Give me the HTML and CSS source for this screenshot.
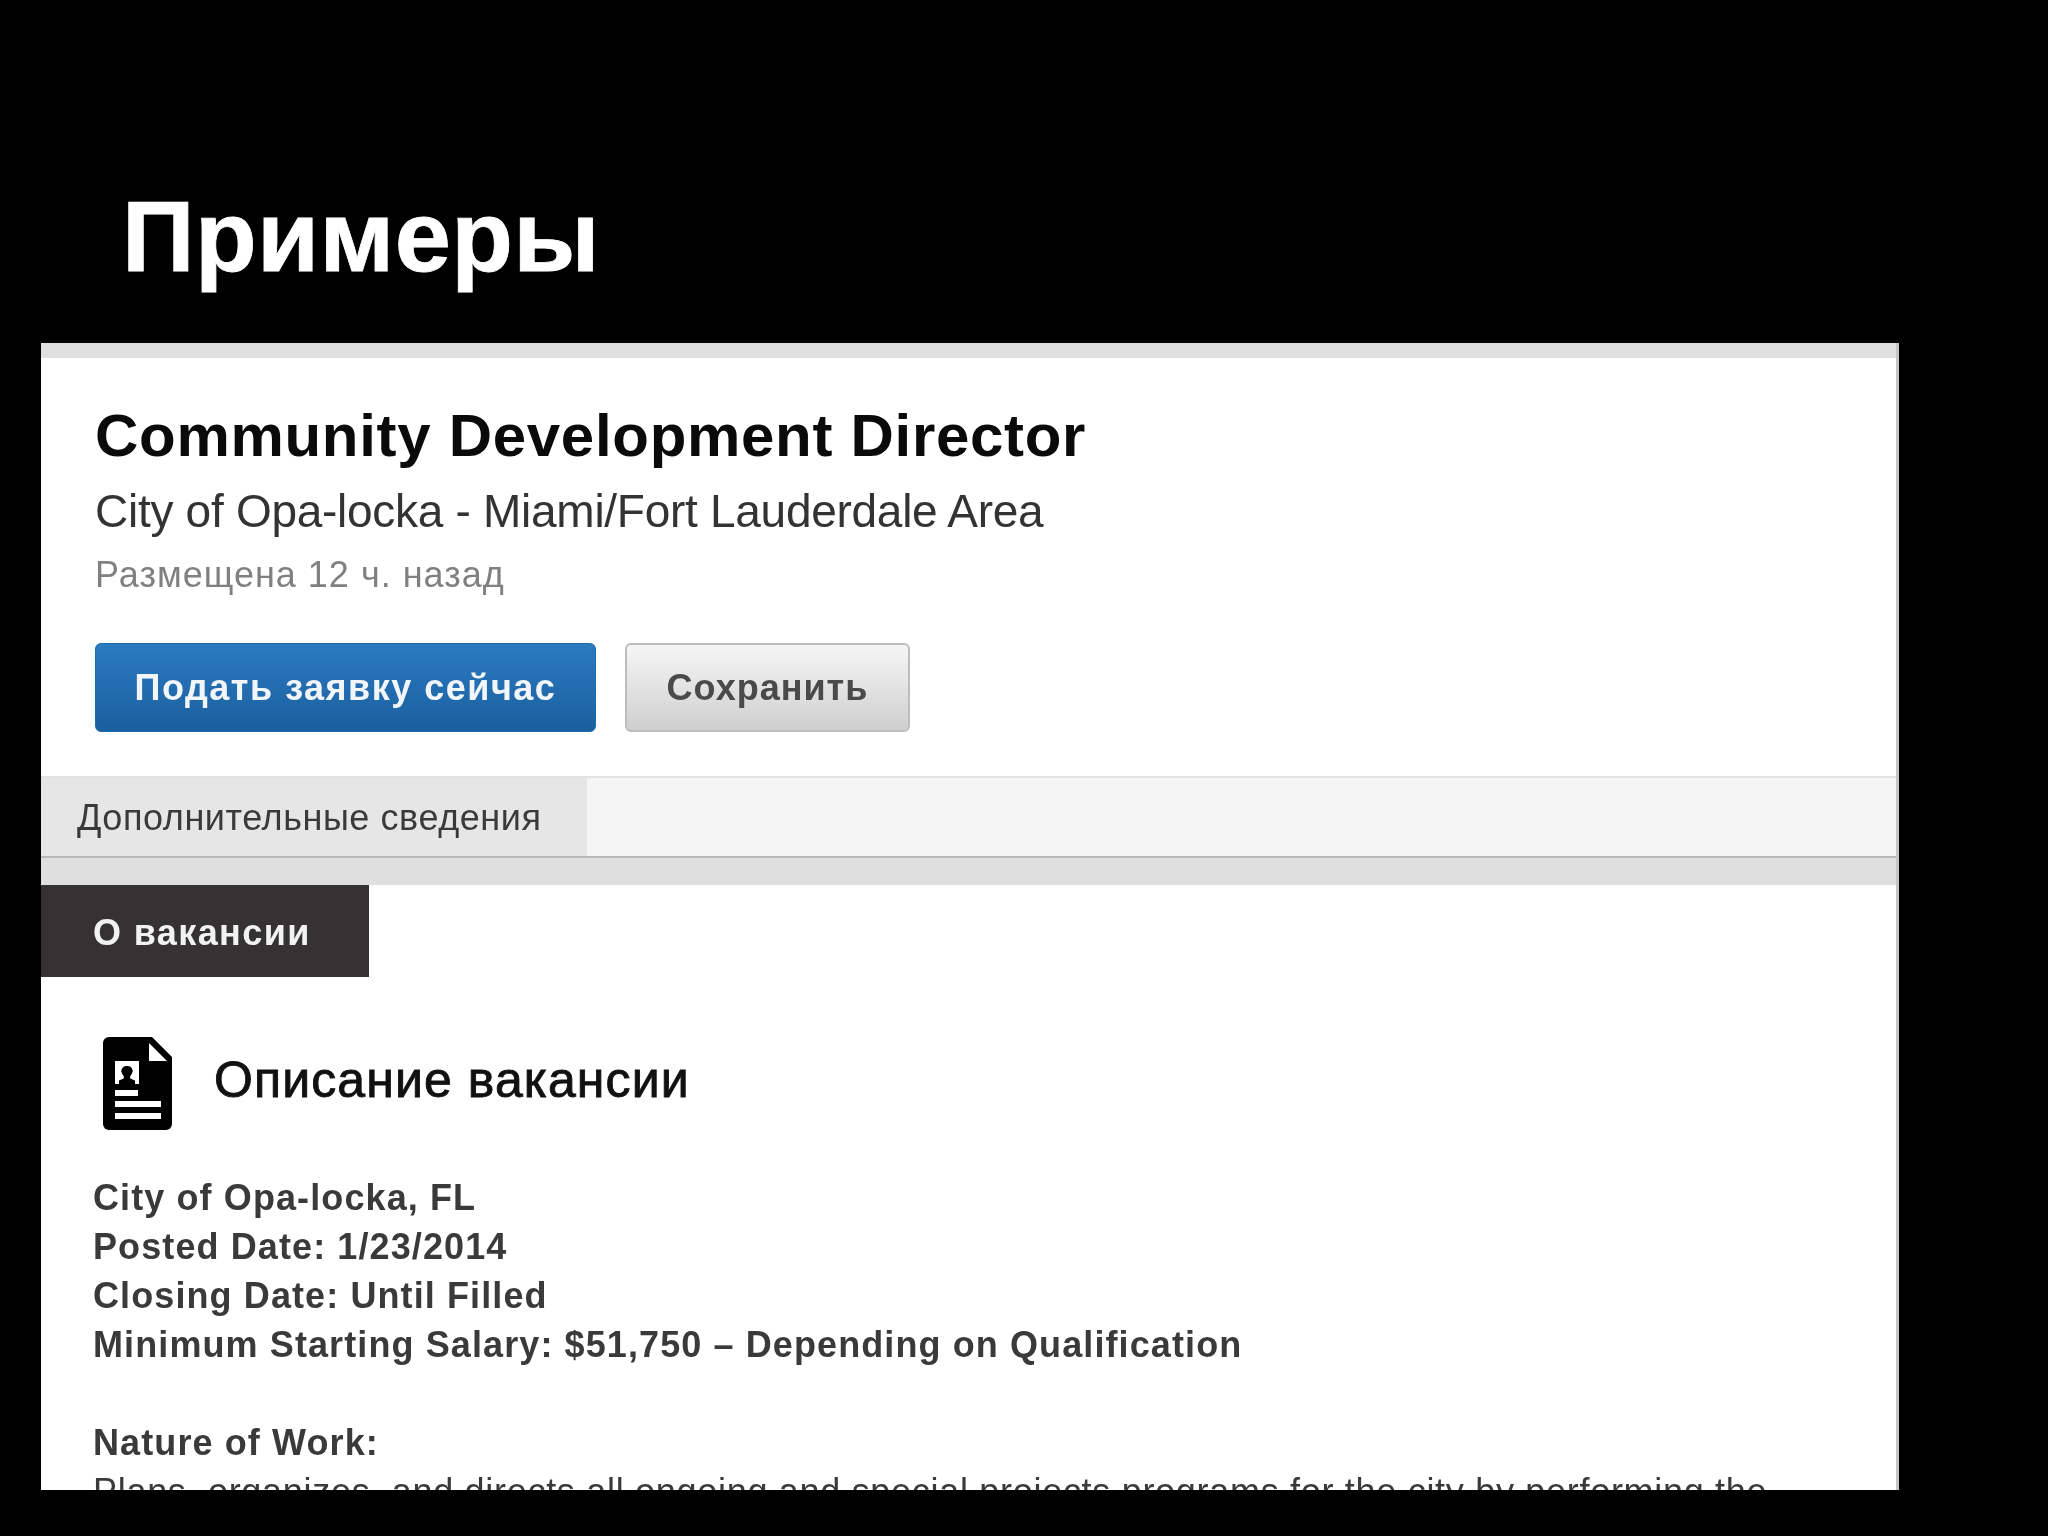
FILE: index.html
```html
<!DOCTYPE html>
<html lang="ru">
<head>
<meta charset="utf-8">
<title>Примеры</title>
<link rel="stylesheet" href="styles.css">
</head>
<body>
<main class="slide">
  <h1 class="slide-title">Примеры</h1>
  <section class="card">
    <div class="strip-top"></div>
    <header class="job-head">
      <h2 class="job-title">Community Development Director</h2>
      <p class="job-company">City of Opa-locka - Miami/Fort Lauderdale Area</p>
      <p class="job-date">Размещена 12 ч. назад</p>
      <div class="actions">
        <button class="btn btn-primary">Подать заявку сейчас</button>
        <button class="btn btn-secondary">Сохранить</button>
      </div>
    </header>
    <nav class="tabs"><span class="tab">Дополнительные сведения</span></nav>
    <div class="strip-mid"></div>
    <div class="section-tab">О вакансии</div>
    <div class="doc-head">
      <svg class="doc-icon" viewBox="0 0 70 93" aria-hidden="true">
        <path fill="#000" d="M6 0H49L69 20V87a6 6 0 0 1-6 6H6a6 6 0 0 1-6-6V6a6 6 0 0 1 6-6Z"/>
        <path fill="#fff" d="M46 6V24H64Z"/>
        <rect fill="#fff" x="12" y="24" width="24" height="23"/>
        <path fill="#000" d="M24 29a5 5 0 0 1 5 7.500c-1 2-2 2.500-2 4 0 1.500 3 2 5 3V47H16v-3.500c2-1 5-1.500 5-3 0-1.500-1-2-2-4a5 5 0 0 1 5-7.500Z"/>
        <rect fill="#fff" x="12" y="53" width="23" height="6"/>
        <rect fill="#fff" x="12" y="64" width="46" height="6"/>
        <rect fill="#fff" x="12" y="76" width="46" height="6"/>
      </svg>
      <h3 class="doc-title">Описание вакансии</h3>
    </div>
    <div class="doc-body">
      <p class="doc-para strong">City of Opa-locka, FL<br>Posted Date: 1/23/2014<br>Closing Date: Until Filled<br>Minimum Starting Salary: $51,750 – Depending on Qualification</p>
      <p class="doc-para strong">Nature of Work:</p>
      <p class="doc-para plain">Plans, organizes, and directs all ongoing and special projects programs for the city by performing the</p>
    </div>
  </section>
</main>
</body>
</html>
```

FILE: styles.css
```css
* { box-sizing: border-box; }
html, body { margin: 0; padding: 0; background: #000; }
body { font-family: "Liberation Sans", Arial, sans-serif; }
.slide { width: 2048px; height: 1536px; overflow: hidden; padding-top: 181px; }
.slide-title {
  margin: 0 0 52px;
  padding-left: 122px;
  height: 110px;
  font-size: 101px;
  line-height: 110px;
  letter-spacing: 0.4px;
  font-weight: 700;
  -webkit-text-stroke: 0.8px #fff;
  color: #fff;
}
.card {
  margin-left: 41px;
  width: 1858px;
  height: 1147px;
  overflow: hidden;
  background: #fff;
  border-right: 3px solid #c6c6c6;
  filter: blur(0.5px);
}
.strip-top { height: 15px; background: #e0e0e0; }
.job-head { height: 418px; padding: 44px 0 0 54px; }
.job-title {
  margin: 0;
  font-size: 60px;
  line-height: 68px;
  letter-spacing: 0.7px;
  font-weight: 700;
  color: #0a0a0a;
}
.job-company {
  margin: 13px 0 0;
  font-size: 46px;
  line-height: 56px;
  letter-spacing: -0.28px;
  color: #333;
}
.job-date {
  margin: 14px 0 0;
  font-size: 36px;
  line-height: 44px;
  letter-spacing: 1px;
  color: #808080;
}
.actions { display: flex; gap: 29px; margin-top: 46px; }
.btn {
  height: 89px;
  padding: 0;
  border-radius: 6px;
  font-family: inherit;
  font-size: 36px;
  font-weight: 700;
}
.btn-primary {
  width: 501px;
  border: 1px solid #1c6aa8;
  background: linear-gradient(#2b7bc1, #1a5f9f);
  letter-spacing: 1.5px;
  color: #f2f6fa;
}
.btn-secondary {
  width: 285px;
  border: 2px solid #bdbdbd;
  background: linear-gradient(#f6f6f6, #cfcfcf);
  letter-spacing: 1px;
  color: #4a4a4a;
}
.tabs {
  height: 82px;
  background: #f6f5f6;
  border-top: 2px solid #e2e2e2;
  border-bottom: 2px solid #b8b8b8;
  display: flex;
}
.tab {
  width: 546px;
  padding: 2px 0 0 36px;
  display: flex;
  align-items: center;
  background: #e7e6e7;
  font-size: 36px;
  letter-spacing: 0.57px;
  color: #3a3a3a;
}
.strip-mid { height: 27px; background: #e0dfe0; }
.section-tab {
  width: 328px;
  height: 92px;
  padding: 4px 0 0 52px;
  display: flex;
  align-items: center;
  background: #343233;
  font-size: 36px;
  letter-spacing: 1.4px;
  font-weight: 700;
  color: #f2f2f2;
}
.doc-head {
  display: flex;
  align-items: center;
  gap: 41px;
  margin: 60px 0 0 62px;
}
.doc-icon { width: 70px; height: 93px; display: block; flex: none; }
.doc-title {
  margin: 0 0 8px;
  font-size: 50px;
  line-height: 56px;
  letter-spacing: 1.1px;
  font-weight: 400;
  -webkit-text-stroke: 0.9px #111;
  color: #111;
}
.doc-body { margin-top: 43px; padding-left: 52px; }
.doc-para {
  margin: 0 0 49px;
  font-size: 36px;
  line-height: 49px;
  color: #3a3a3a;
}
.doc-para.strong { font-weight: 700; letter-spacing: 1.1px; }
.doc-para.plain { letter-spacing: 0.7px; }
.doc-para.strong + .doc-para.plain { margin-top: -49px; }
```
